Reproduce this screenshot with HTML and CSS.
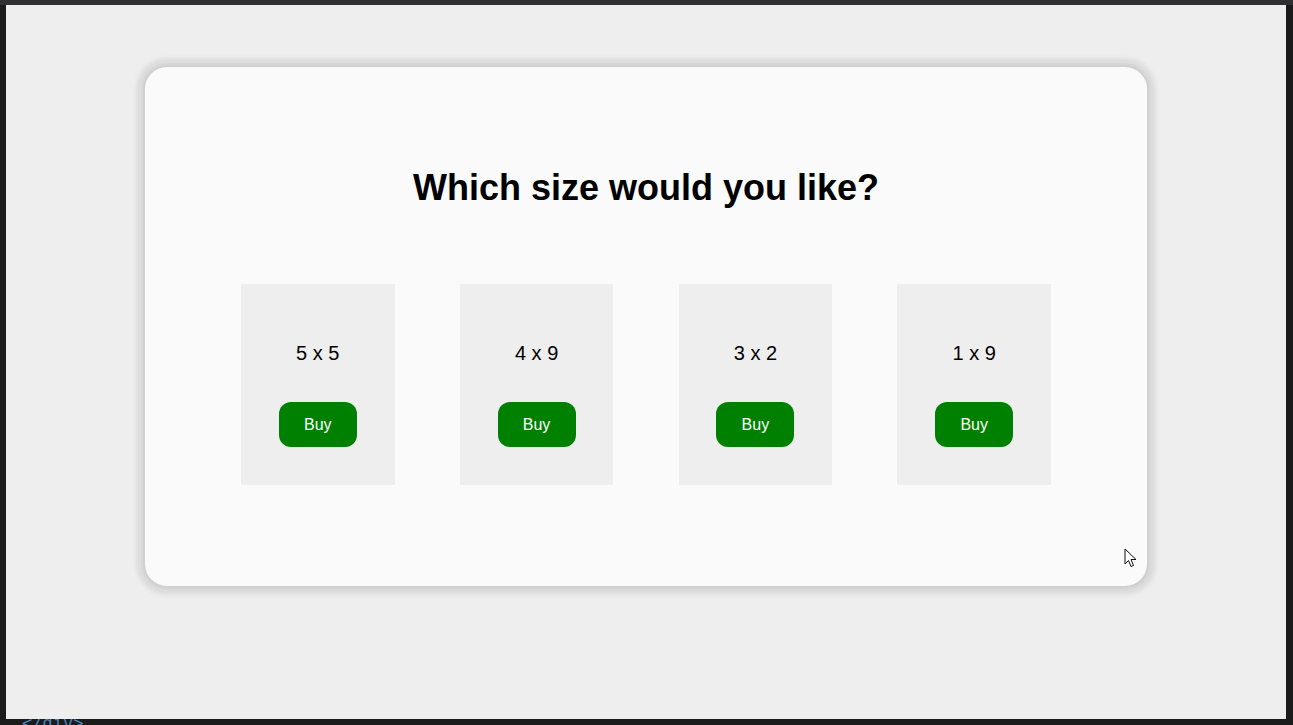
FILE: index.html
```html
<!DOCTYPE html>
<html lang="en">
<head>
<meta charset="utf-8">
<title>Which size would you like?</title>
<link rel="stylesheet" href="styles.css">
</head>
<body>
<div class="frame">
  <div class="topbar"></div>
  <div class="viewport">
    <div class="card">
      <h1 class="title">Which size would you like?</h1>
      <div class="options">
        <div class="option"><p class="size">5 x 5</p><button class="buy">Buy</button></div>
        <div class="option"><p class="size">4 x 9</p><button class="buy">Buy</button></div>
        <div class="option"><p class="size">3 x 2</p><button class="buy">Buy</button></div>
        <div class="option"><p class="size">1 x 9</p><button class="buy">Buy</button></div>
      </div>
      <svg class="cursor" width="14" height="21" viewBox="0 0 14 21"><path d="M1 1 L1 16 L4.5 12.5 L7 18.5 L9.5 17.5 L7 11.5 L12 11.5 Z" fill="#fff" stroke="#111" stroke-width="1" stroke-linejoin="miter"/></svg>
    </div>
  </div>
  <div class="codeline">&lt;/div&gt;</div>
</div>
</body>
</html>
```
FILE: styles.css
```css
html, body {
  margin: 0;
  padding: 0;
  height: 100%;
}
body {
  background: #1b1b1b;
  font-family: "Liberation Sans", Arial, sans-serif;
  overflow: hidden;
}
.frame {
  position: relative;
  height: 725px;
  display: flex;
  flex-direction: column;
}
.topbar {
  height: 5px;
  background: #2f3034;
}
.viewport {
  margin: 0 7px 0 6px;
  height: 714px;
  background: #eeeeee;
  display: flex;
  justify-content: center;
  align-items: flex-start;
  padding-top: 62px;
  box-sizing: border-box;
}
.card {
  position: relative;
  width: 1002px;
  box-sizing: border-box;
  background: #fafafa;
  border-radius: 22px;
  padding: 100px 0 101px;
  box-shadow: 0 0 0 2px #d0d0d0, 0 0 0 4px #d7d7d7, 0 0 0 7px #dddddd, 0 0 0 9px #e3e3e3, 0 0 2px 11px #e8e8e8;
  display: flex;
  flex-direction: column;
  align-items: center;
}
.title {
  margin: 0 0 76px;
  font-size: 36px;
  font-weight: bold;
  color: #000;
  line-height: 41px;
}
.options {
  display: flex;
  gap: 65.3px;
  justify-content: center;
}
.option {
  width: 153.5px;
  height: 201px;
  background: #eeeeee;
  display: flex;
  flex-direction: column;
  align-items: center;
  box-sizing: border-box;
  padding-top: 58px;
}
.size {
  margin: 0;
  font-size: 20px;
  line-height: 23px;
  color: #000;
}
.buy {
  margin-top: 37px;
  width: 78px;
  height: 45px;
  border: none;
  border-radius: 12px;
  background: #008000;
  color: #fff;
  font-family: "Liberation Sans", Arial, sans-serif;
  font-size: 16px;
  padding: 0;
  cursor: pointer;
}
.cursor {
  position: absolute;
  left: 979px;
  top: 481px;
}
.codeline {
  position: absolute;
  left: 22px;
  top: 713px;
  font-family: "DejaVu Sans Mono", monospace;
  font-size: 17px;
  color: #4f7fb8;
  z-index: -1;
}
```
